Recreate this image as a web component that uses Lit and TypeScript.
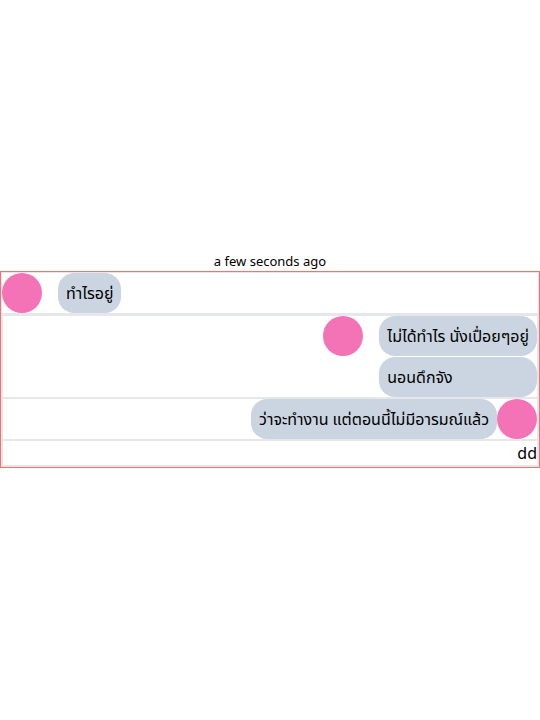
import { LitElement, html, css } from "lit";
import { customElement } from "lit/decorators.js";

@customElement("app-root")
export class AppRoot extends LitElement {
  static styles = css`
    :host {
      display: flex;
      flex-direction: column;
      justify-content: center;
      min-height: 100vh;
      background: #fff;
      color: #000;
      font-family: "Noto Sans", "Noto Sans Thai", sans-serif;
      font-size: 16px;
      line-height: 24px;
    }
    .time {
      font-size: 13px;
      line-height: 19px;
      text-align: center;
    }
    .chat {
      border: 1px solid #f87171;
    }
    .row,
    .group {
      border: 1px solid #e5e7eb;
    }
    .row {
      display: flex;
    }
    .spaced {
      gap: 16px;
    }
    .mine {
      justify-content: flex-end;
    }
    .avatar {
      flex: none;
      width: 40px;
      height: 40px;
      border-radius: 50%;
      background: #f472b6;
    }
    .stack {
      display: flex;
      flex-direction: column;
      gap: 1px;
    }
    .bubble {
      padding: 8px;
      border-radius: 16px;
      background: #cbd5e1;
    }
  `;

  render() {
    return html`
      <div class="time">a few seconds ago</div>
      <main class="chat">
        <div class="row spaced">
          <div class="avatar"></div>
          <div class="bubble">ทำไรอยู่</div>
        </div>
        <div class="group">
          <div class="row spaced mine">
            <div class="avatar"></div>
            <div class="stack">
              <div class="bubble">ไม่ได้ทำไร นั่งเปื่อยๆอยู่</div>
              <div class="bubble">นอนดึกจัง</div>
            </div>
          </div>
          <div class="row mine">
            <div class="bubble">ว่าจะทำงาน แต่ตอนนี้ไม่มีอารมณ์แล้ว</div>
            <div class="avatar"></div>
          </div>
          <div class="row mine">dd</div>
        </div>
      </main>
    `;
  }
}
